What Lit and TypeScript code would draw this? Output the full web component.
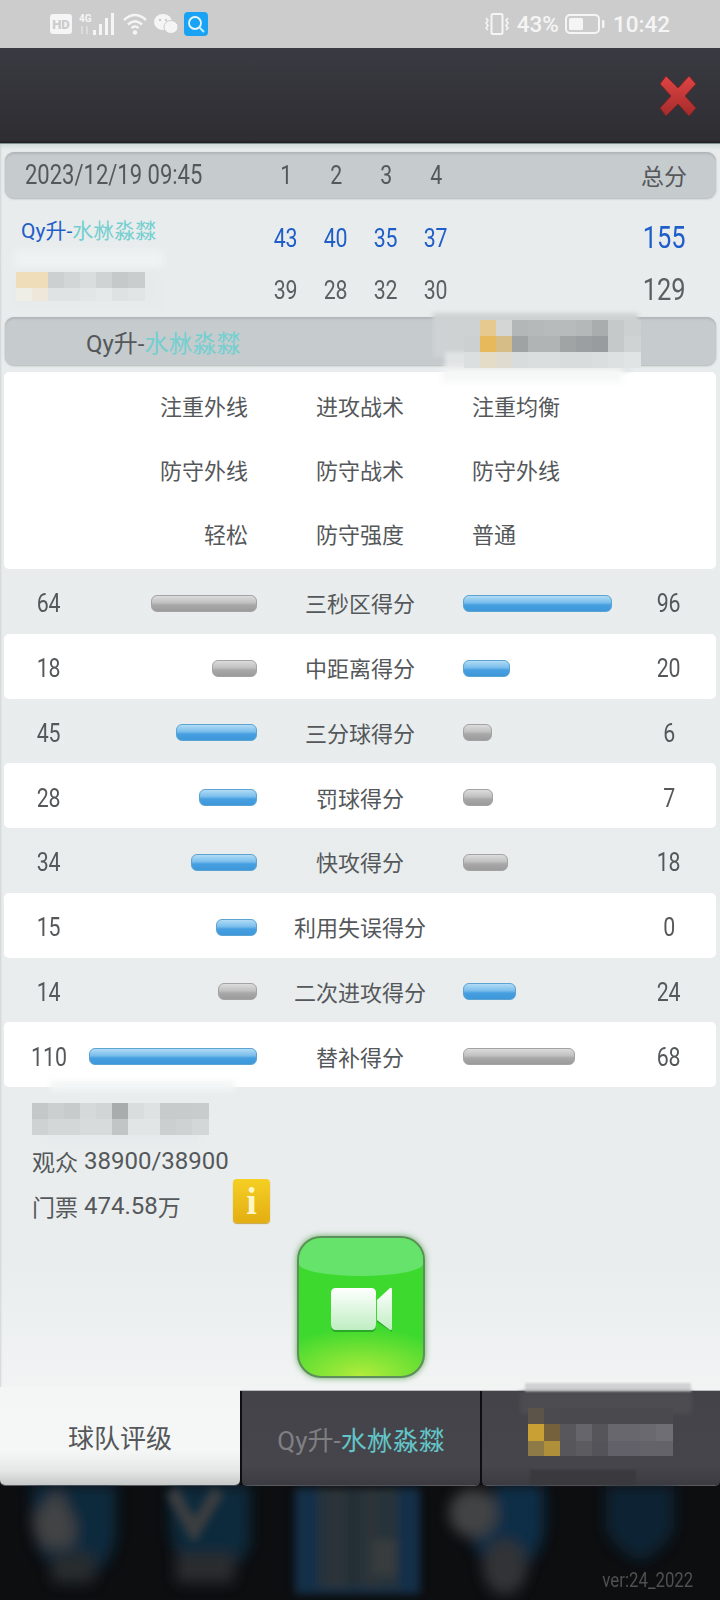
import { LitElement, html, css, svg } from "lit";
import { customElement } from "lit/decorators.js";

const TAC = [
  ["注重外线", "进攻战术", "注重均衡"],
  ["防守外线", "防守战术", "防守外线"],
  ["轻松", "防守强度", "普通"],
];

const STATS: [number, string, number][] = [
  [64, "三秒区得分", 96],
  [18, "中距离得分", 20],
  [45, "三分球得分", 6],
  [28, "罚球得分", 7],
  [34, "快攻得分", 18],
  [15, "利用失误得分", 0],
  [14, "二次进攻得分", 24],
  [110, "替补得分", 68],
];

// censored areas of the screenshot: soft smudges, then mosaic rows
type Patch = { x: number; y: number; w: number; h: number; c: string; blur?: number };

const mosaic = (x: number, y: number, h: number, colors: string[]): Patch[] =>
  colors.map((c, i) => ({ x: x + i * 16, y, w: 16.5, h, c }));

const PATCHES: Patch[] = [
  // second team, score row
  { x: 14, y: 250, w: 150, h: 20, c: "#eff2f3", blur: 4 },
  { x: 16, y: 270, w: 145, h: 34, c: "#e6eaeb", blur: 3 },
  ...mosaic(16, 272, 16, ["#efdcb9", "#efdcb9", "#cdd0d1", "#d3d6d7", "#dadddd", "#d0d3d4", "#c6c9ca", "#cacdce"]),
  ...mosaic(16, 288, 13, ["#efeee6", "#efe8da", "#e0e3e4", "#e0e3e4", "#e3e6e7", "#e6e9ea", "#dfe2e3", "#e2e5e6"]),
  // second team, name bar
  { x: 433, y: 313, w: 205, h: 44, c: "#ced2d3", blur: 2 },
  { x: 445, y: 352, w: 185, h: 20, c: "#e1e4e5", blur: 2 },
  { x: 442, y: 368, w: 180, h: 14, c: "#f6f7f7", blur: 3 },
  ...mosaic(464, 320, 16, ["#cfd2d3", "#e5c98f", "#d4d6d6", "#b3b7b8", "#b6b9ba", "#b8bbbc", "#b8bbbc", "#b5b8b9", "#a9adae", "#c5c9ca", "#cdd0d1"]),
  ...mosaic(464, 336, 16, ["#cdd0d1", "#e7b95b", "#d6bd88", "#9fa3a4", "#b0b4b5", "#b0b4b5", "#a0a4a5", "#9c9fa1", "#999c9e", "#c5c9ca", "#d0d3d4"]),
  ...mosaic(464, 352, 16, ["#dcdfe0", "#e4dcc6", "#dfdbd0", "#d9dcdd", "#dbdedf", "#dbdedf", "#d9dcdd", "#d9dcdd", "#dbdedf", "#dee1e2", "#e1e4e5"]),
  // arena name
  { x: 50, y: 1081, w: 185, h: 10, c: "#f2f5f5", blur: 3 },
  { x: 48, y: 1130, w: 150, h: 10, c: "#e4e8e9", blur: 4 },
  ...mosaic(32, 1103, 16, ["#c5c8c9", "#cccfd0", "#c8cbcc", "#d6d9da", "#d2d5d6", "#a9acad", "#dadddd", "#dfe2e3", "#c8cbcc", "#c8cbcc", "#c9cccd"]),
  ...mosaic(32, 1119, 16, ["#cfd2d3", "#d4d7d8", "#d4d7d8", "#d8dbdc", "#d8dbdc", "#c2c5c6", "#e2e5e6", "#e2e5e6", "#cccfd0", "#cfd2d3", "#d4d7d8"]),
  // second team, tab
  { x: 525, y: 1383, w: 166, h: 9, c: "#d0d3d3", blur: 1 },
  { x: 520, y: 1392, w: 172, h: 22, c: "#4c4c51", blur: 2 },
  { x: 530, y: 1470, w: 106, h: 15, c: "#39393e", blur: 1 },
  ...mosaic(528, 1408, 16, ["#5c5349", "#4b4a4f", "#4a494e", "#4a494e", "#4a494e", "#4a494e", "#4a494e", "#4a494e", "#4a494e"]),
  ...mosaic(528, 1424, 17, ["#c9a034", "#75613c", "#58575c", "#66656b", "#56555a", "#68676d", "#68676d", "#6a696f", "#6f6e74"]),
  ...mosaic(528, 1441, 15, ["#8e7a47", "#b08f3b", "#57565b", "#5c5b60", "#54535a", "#62616a", "#62616a", "#64636a", "#64636a"]),
];

const dockArt = svg`
  <defs>
    <filter id="soft" x="-30%" y="-30%" width="160%" height="160%"><feGaussianBlur stdDeviation="7" /></filter>
    <filter id="softer" x="-30%" y="-30%" width="160%" height="160%"><feGaussianBlur stdDeviation="4" /></filter>
  </defs>
  <g opacity="0.72">
    <g filter="url(#soft)">
      <path d="M32 0H116V50Q112 80 90 90H60Q36 70 32 40Z" fill="#093650" />
      <path d="M170 0H250V60Q240 85 215 90H190Q172 70 170 40Z" fill="#09344e" />
      <path d="M496 0H544V50Q530 90 505 95Q480 80 470 50Z" fill="#0a3a5c" />
      <path d="M606 0H674V45Q660 70 640 76Q618 68 606 45Z" fill="#0a2c40" />
      <circle cx="473" cy="28" r="24" fill="#575859" />
      <ellipse cx="505" cy="82" rx="22" ry="28" fill="#3f4245" />
      <path d="M58 4L76 40L72 62H42L32 34Z" fill="#575859" />
      <rect x="52" y="68" width="42" height="30" fill="#33373b" />
      <rect x="176" y="68" width="58" height="30" fill="#35383b" />
    </g>
    <path d="M172 6L194 46L218 6" fill="none" stroke="#505152" stroke-width="13" filter="url(#softer)" />
    <path d="M194 44V72" fill="none" stroke="#46484a" stroke-width="18" filter="url(#soft)" />
    <g filter="url(#softer)">
      <rect x="295" y="3" width="125" height="106" fill="#123c5e" />
      <rect x="318" y="3" width="80" height="100" fill="#33424c" />
      <rect x="332" y="3" width="8" height="100" fill="#3d4348" />
      <rect x="350" y="3" width="8" height="100" fill="#2c3840" />
      <rect x="368" y="3" width="8" height="100" fill="#3d4348" />
      <rect x="372" y="55" width="24" height="35" fill="#49504f" />
    </g>
  </g>`;

@customElement("app-root")
export class AppRoot extends LitElement {
  static styles = css`
    :host {
      display: block;
      position: relative;
      width: 720px;
      height: 1600px;
      overflow: hidden;
      background: #0d0e10;
      color: #55585a;
      font-family: Roboto, "Noto Sans CJK SC", sans-serif;
      font-size: 22px;
    }

    .status {
      height: 48px;
      background: #cccccc;
      display: flex;
      align-items: center;
      justify-content: space-between;
      padding: 0 50px 0 50px;
      box-sizing: border-box;
      color: #f5f5f5;
    }
    .status .side {
      display: flex;
      align-items: center;
    }
    .status svg {
      display: block;
    }
    .st-text {
      font-size: 22.5px;
      font-weight: 500;
      line-height: 26px;
    }

    .header {
      height: 95px;
      box-sizing: border-box;
      background: linear-gradient(#3a3a42, #2e2d32 97%, #1f1f22);
      display: flex;
      justify-content: flex-end;
      align-items: center;
      padding: 0 23px 0 0;
    }

    .panel {
      position: relative;
      height: 1248px;
      box-sizing: border-box;
      padding-top: 8px;
      background: linear-gradient(#d3dbda, #e8ecec 6px, #e9edee 90%, #f2f4f4);
      border-top: 1px solid #7f8f8f;
      border-bottom: 1px solid #bdbdbd;
      box-shadow: inset 3px 0 2px -2px #d0d4d5;
    }

    .bar {
      margin: 0 4px 0 5px;
      border-radius: 9px;
      background: #c6cbce;
      box-shadow: inset 0 3px 2px -1px #b1b6b8, 0 1px 2px rgba(120, 125, 128, 0.5);
      color: #55585a;
    }

    .scores {
      display: grid;
      grid-template-columns: 235px repeat(4, 50px) 1fr 90px;
      align-items: center;
      margin: 0 4px 0 5px;
      padding: 0 7px 0 21px;
      text-align: center;
    }
    .scores.top {
      height: 46px;
    }
    .scores.line {
      height: 52px;
    }
    .scores.first {
      margin-top: 14px;
      color: #1f5ec9;
    }
    .scores.second {
      margin-bottom: 1px;
      color: #5c5f61;
    }

    .num {
      display: inline-block;
      font-size: 26px;
      line-height: 30px;
      transform: scaleX(0.82);
    }
    .date {
      justify-self: start;
      margin-left: -1px;
      font-size: 27px;
      transform: scaleX(0.815);
      transform-origin: left center;
      white-space: nowrap;
    }
    .total {
      font-size: 31px;
    }
    .cn-total {
      font-size: 23px;
    }
    .row-name {
      justify-self: start;
      margin: -18px 0 0 -5px;
      font-size: 21px;
      white-space: nowrap;
    }

    .teal {
      color: #74cfd0;
    }

    .team-bar {
      height: 48px;
      display: flex;
      align-items: center;
      padding-left: 81px;
      font-size: 24px;
    }

    .tactics {
      margin: 7px 4px 0;
      height: 197px;
      box-sizing: border-box;
      padding-top: 1px;
      background: #fff;
      border-radius: 5px;
    }
    .tactics .tr {
      height: 64px;
      display: grid;
      grid-template-columns: 1fr 224px 1fr;
      align-items: center;
    }
    .tactics .tr > :first-child {
      text-align: right;
    }
    .tactics .tr > :nth-child(2) {
      text-align: center;
    }

    .stats {
      margin: 0 4px;
      display: grid;
      grid-auto-rows: 64.75px;
    }
    .stat {
      display: grid;
      grid-template-columns: 52px 182px 206px 180px 52px;
      align-items: center;
      box-sizing: border-box;
      padding: 2px 0 0 19px;
      text-align: center;
      border-radius: 5px;
    }
    .stat:nth-child(even) {
      background: #fff;
    }
    .stat .num {
      position: relative;
      top: 1px;
    }
    .track {
      display: flex;
      padding-top: 2px;
    }
    .track.left {
      justify-content: flex-end;
    }
    .pill {
      height: 17px;
      box-sizing: border-box;
      border-radius: 6px;
      border: 1px solid #a3a3a3;
      background: linear-gradient(#dcdcdc, #c0c0c0 45%, #a8a8a8 60%, #9b9b9b);
    }
    .pill.win {
      border-color: #5aa3d2;
      background: linear-gradient(#b2dcf5, #78bdec 45%, #459fe0 60%, #3d97d8);
    }

    .footer {
      padding: 5px 0 0 32px;
    }
    .footer .line {
      height: 46px;
      width: 238px;
      display: flex;
      align-items: center;
      font-size: 23px;
      white-space: nowrap;
    }
    .footer .line.tickets {
      margin-top: -1px;
    }
    .digits {
      margin-left: 6px;
      font-size: 24px;
    }
    .info {
      margin: -10px 0 0 auto;
      flex: none;
      width: 37px;
      height: 44px;
      border-radius: 4px;
      background: linear-gradient(#f5cf24, #e3ae12);
      box-shadow: 0 1px 1px #c9a64a;
      color: #fff6c8;
      font: bold 38px/44px "Liberation Serif", serif;
      text-align: center;
    }
    .call {
      position: relative;
      overflow: hidden;
      margin: 7px 0 0 265px;
      width: 128px;
      height: 142px;
      box-sizing: border-box;
      border: 2px solid #5c8f5a;
      border-radius: 24px;
      box-shadow: 0 0 6px rgba(70, 150, 60, 0.8);
      background: radial-gradient(ellipse 80% 35% at 50% 100%, #b2ec3c, transparent), #3ed92e;
      display: flex;
      align-items: center;
      justify-content: center;
    }
    .call::before {
      content: "";
      position: absolute;
      left: 0;
      right: 0;
      top: 0;
      height: 38px;
      background: #66e36b;
      border-radius: 0 0 50% 50% / 0 0 12px 12px;
    }
    .call svg {
      position: relative;
      margin-top: 7px;
    }

    .tabs {
      height: 94px;
      display: grid;
      grid-template-columns: 240px 238px 1fr;
      column-gap: 2px;
    }
    .tab {
      position: relative;
      display: flex;
      align-items: center;
      justify-content: center;
      border-radius: 0 0 5px 5px;
      font-size: 26px;
      background: linear-gradient(#444349, #46454b 80%, #3c3b41);
      color: #7f7f83;
      box-shadow: 0 1px 0 #5a5a60;
    }
    .tab.on {
      margin-top: -4px;
      color: #55585a;
      background: linear-gradient(#f4f6f5, #f5f7f6 65%, #e6e8e7 85%, #c7c9c8);
    }
    .tab .teal {
      color: #63c5c7;
    }

    .dock {
      position: relative;
      height: 115px;
    }
    .dock svg {
      position: absolute;
      inset: 0;
    }
    .ver {
      position: absolute;
      right: 27px;
      top: 83px;
      font-size: 20px;
      line-height: 24px;
      color: #4f5051;
      transform: scaleX(0.84);
      transform-origin: right center;
    }

    .patch {
      position: absolute;
      pointer-events: none;
    }
  `;

  private name(cls = "") {
    return html`<span class=${cls}>Qy升-</span><span class="teal">水沝淼㵘</span>`;
  }

  private statusBar() {
    return html`
      <div class="status">
        <div class="side">
          <svg width="22" height="20" viewBox="0 0 22 20">
            <rect width="22" height="20" rx="3" fill="#f5f5f5" />
            <text x="11" y="15" text-anchor="middle" font-family="Roboto" font-weight="900" font-size="13" fill="#cccccc">HD</text>
          </svg>
          <svg style="margin-left:7px" width="35" height="24" viewBox="0 0 35 24">
            <text x="0" y="10" font-family="Roboto" font-weight="700" font-size="10" fill="#f5f5f5">4G</text>
            <path d="M3 14v8M8 14v8" stroke="#dcdcdc" stroke-width="2" />
            <rect x="14" y="18" width="3" height="5" fill="#f5f5f5" />
            <rect x="20" y="12" width="3" height="11" fill="#f5f5f5" />
            <rect x="26" y="6" width="3" height="17" fill="#f5f5f5" />
            <rect x="32" y="1" width="3" height="22" fill="#f5f5f5" />
          </svg>
          <svg style="margin-left:9px" width="25" height="22" viewBox="0 0 25 22" fill="none" stroke="#f5f5f5" stroke-width="2.4">
            <path d="M1 7Q12 -3 23 7M5 11.5Q12 5 19 11.5M8.5 15Q12 12 15.5 15" />
            <circle cx="12" cy="19.5" r="2.2" fill="#f5f5f5" stroke="none" />
          </svg>
          <svg style="margin-left:6px" width="24" height="20" viewBox="0 0 24 20" fill="#f5f5f5">
            <ellipse cx="9" cy="8" rx="9" ry="8" />
            <ellipse cx="17" cy="13" rx="7" ry="6.5" stroke="#cccccc" />
            <circle cx="6" cy="6" r="1.2" fill="#cccccc" />
            <circle cx="12" cy="6" r="1.2" fill="#cccccc" />
          </svg>
          <svg style="margin-left:6px" width="24" height="24" viewBox="0 0 24 24">
            <rect width="24" height="24" rx="4" fill="#1aa3f5" />
            <circle cx="11" cy="11" r="6" fill="none" stroke="#e6f7ff" stroke-width="1.8" />
            <path d="M15.5 15.5L20 20" stroke="#bff0ff" stroke-width="2" />
          </svg>
        </div>
        <div class="side">
          <svg width="28" height="22" viewBox="0 0 28 22" fill="none" stroke="#f5f5f5" stroke-width="1.6">
            <rect x="8.5" y="1" width="11" height="20" rx="1.5" stroke-width="2" />
            <path d="M3 5l2 2.5L3 10l2 2.5L3 15l2 2M25 5l-2 2.5L25 10l-2 2.5L25 15l-2 2" />
          </svg>
          <span class="st-text" style="margin-left:6px">43%</span>
          <svg style="margin-left:6px" width="40" height="20" viewBox="0 0 40 20">
            <rect x="1" y="1" width="33" height="18" rx="4" fill="none" stroke="#f5f5f5" stroke-width="2" />
            <rect x="4" y="4" width="14" height="12" rx="1.5" fill="#f5f5f5" />
            <rect x="37" y="6" width="2.5" height="8" rx="1" fill="#f5f5f5" />
          </svg>
          <span class="st-text" style="margin-left:8px">10:42</span>
        </div>
      </div>
    `;
  }

  private scoreRow(cls: string, label: unknown, nums: number[], total: number) {
    return html`
      <div class="scores line ${cls}">
        ${label}
        ${nums.map((n) => html`<div><span class="num">${n}</span></div>`)}
        <div></div>
        <div><span class="num total">${total}</span></div>
      </div>
    `;
  }

  private statRow([a, label, b]: [number, string, number]) {
    const pill = (v: number, win: boolean) =>
      v > 0 ? html`<div class="pill ${win ? "win" : ""}" style="width:${20.5 + v * 1.34}px"></div>` : "";
    return html`
      <div class="stat">
        <div><span class="num">${a}</span></div>
        <div class="track left">${pill(a, a > b)}</div>
        <div>${label}</div>
        <div class="track">${pill(b, b > a)}</div>
        <div><span class="num">${b}</span></div>
      </div>
    `;
  }

  render() {
    return html`
      ${this.statusBar()}
      <div class="header">
        <svg width="38" height="42" viewBox="0 0 38 42">
          <defs>
            <linearGradient id="x" x1="0" y1="0" x2="0" y2="1">
              <stop offset="0" stop-color="#df4444" />
              <stop offset="1" stop-color="#a52b2b" />
            </linearGradient>
          </defs>
          <path d="M7 1L19 13L30 1L37 9L26 21L37 33L30 41L19 29L7 41L1 33L12 21L1 9Z" fill="url(#x)" stroke="#7e2323" stroke-width="1" />
        </svg>
      </div>
      <div class="panel">
        <div class="bar scores top">
          <span class="date">2023/12/19 09:45</span>
          ${[1, 2, 3, 4].map((n) => html`<div><span class="num">${n}</span></div>`)}
          <div></div>
          <div class="cn-total">总分</div>
        </div>
        ${this.scoreRow("first", html`<div class="row-name">${this.name()}</div>`, [43, 40, 35, 37], 155)}
        ${this.scoreRow("second", html`<div></div>`, [39, 28, 32, 30], 129)}
        <div class="bar team-bar">${this.name()}</div>
        <div class="tactics">
          ${TAC.map((r) => html`<div class="tr">${r.map((t) => html`<div>${t}</div>`)}</div>`)}
        </div>
        <div class="stats">${STATS.map((s) => this.statRow(s))}</div>
        <div class="footer">
          <div class="line"></div>
          <div class="line">观众<span class="digits">38900/38900</span></div>
          <div class="line tickets">门票<span class="digits">474.58</span>万<div class="info">i</div></div>
          <div class="call">
            <svg width="61" height="47" viewBox="0 0 61 47">
              <defs>
                <linearGradient id="cam" x1="0" y1="0" x2="0" y2="1">
                  <stop offset="0" stop-color="#ffffff" />
                  <stop offset="1" stop-color="#bfeec2" />
                </linearGradient>
              </defs>
              <path d="M5 1H40Q45 1 45 6V37Q45 43 40 43H5Q0 43 0 37V6Q0 1 5 1ZM46 13L61 1V43L46 33Z" fill="#2aa82a" transform="translate(0 2)" />
              <path d="M5 1H40Q45 1 45 6V37Q45 43 40 43H5Q0 43 0 37V6Q0 1 5 1ZM46 13L59 1Q61 0 61 3V41Q61 44 59 43L46 33Z" fill="url(#cam)" />
            </svg>
          </div>
        </div>
      </div>
      <div class="tabs">
        <div class="tab on">球队评级</div>
        <div class="tab">${this.name()}</div>
        <div class="tab"></div>
      </div>
      <div class="dock">
        <svg width="720" height="115" viewBox="0 0 720 115">${dockArt}</svg>
        <span class="ver">ver:24_2022</span>
      </div>
      ${PATCHES.map(
        (p) => html`<div
          class="patch"
          style="left:${p.x}px;top:${p.y}px;width:${p.w}px;height:${p.h}px;background:${p.c};${p.blur ? `filter:blur(${p.blur}px)` : ""}"
        ></div>`
      )}
    `;
  }
}
